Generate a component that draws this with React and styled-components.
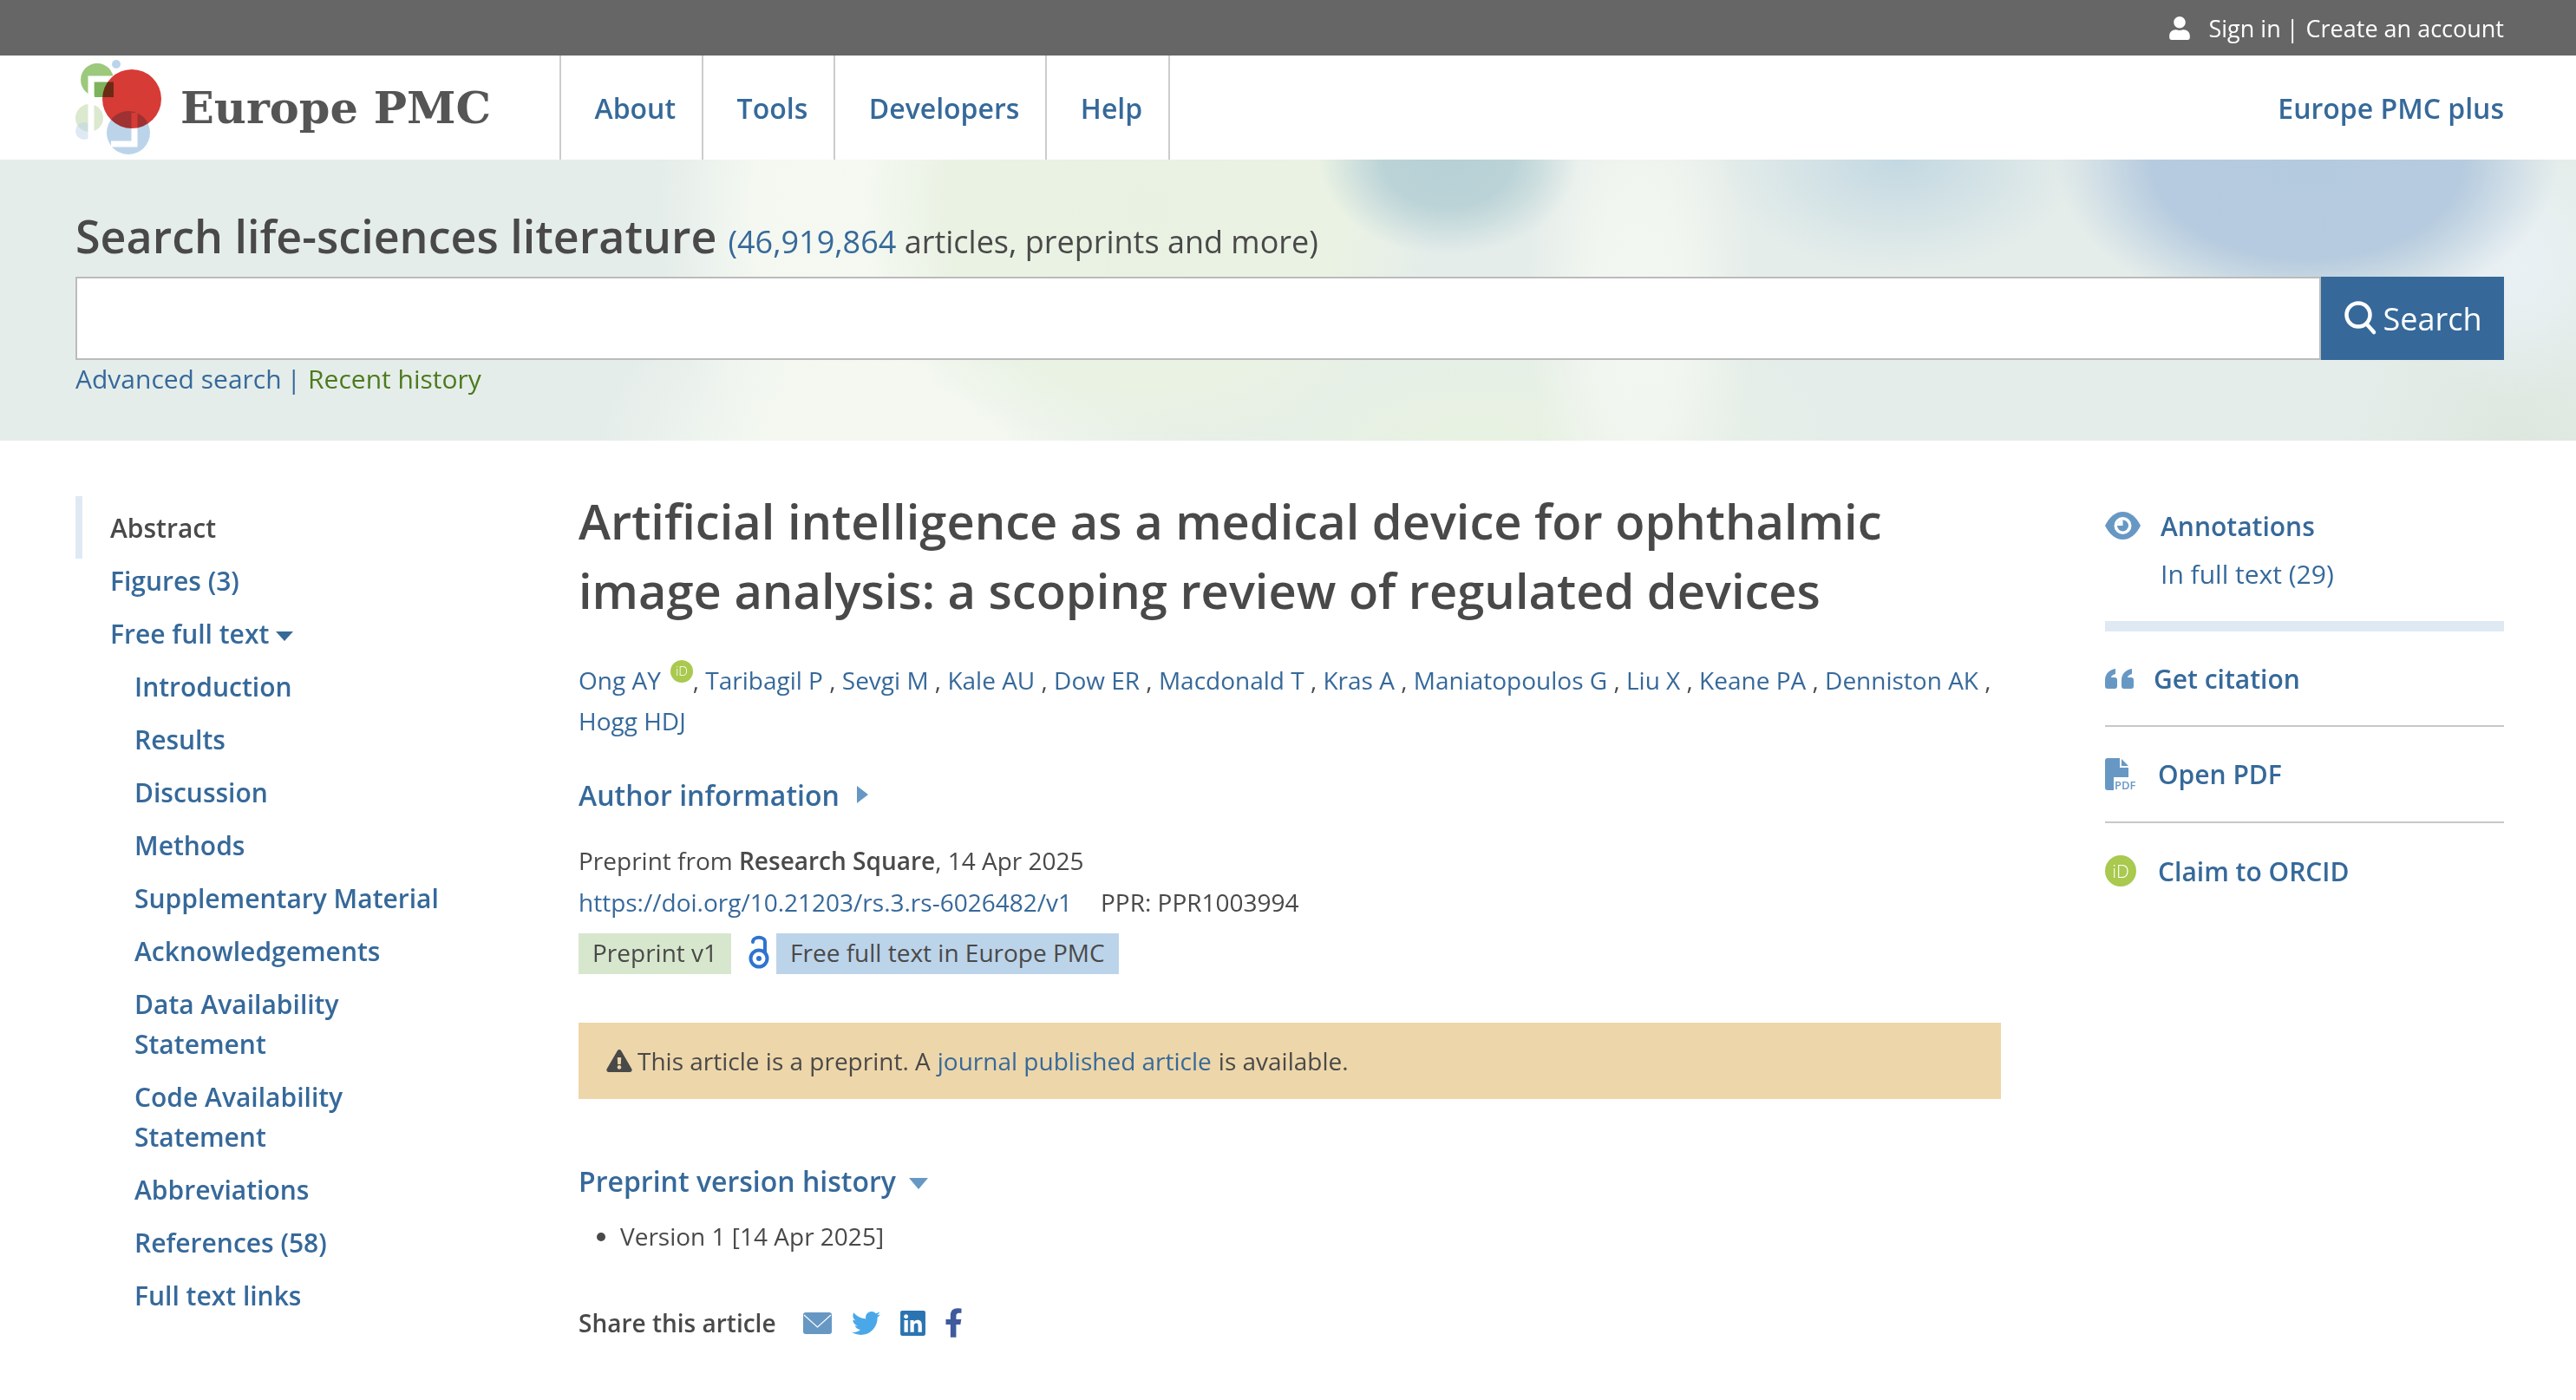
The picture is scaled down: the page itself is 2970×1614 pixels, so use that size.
import React from "react";
import styled, { createGlobalStyle } from "styled-components";
import { FaUser, FaTwitter, FaLinkedin, FaFacebookF, FaExclamationTriangle } from "react-icons/fa";

const linkBlue = "#36699a";
const iconBlue = "#6798c4";
const ink = "#494949";

const GlobalStyle = createGlobalStyle`
  html, body {
    margin: 0;
    background: #fff;
    font-family: "Open Sans", "Noto Sans", sans-serif;
    color: ${ink};
  }
  * { box-sizing: border-box; }
`;

const TopBar = styled.div`
  height: 64px;
  background: #666;
  color: #fff;
  display: flex;
  align-items: center;
  justify-content: flex-end;
  padding-right: 83px;
  font-size: 27px;
`;
const UserIcon = styled(FaUser)`
  width: 24px;
  height: 27px;
  margin-right: 21px;
`;
const Pipe = styled.span`
  margin: 0 8px 0 6px;
`;

const Header = styled.header`
  height: 120px;
  display: flex;
  align-items: stretch;
  padding: 0 83px 0 80px;
`;
const Brand = styled.div`
  width: 565px;
  display: flex;
  align-items: center;
  gap: 18px;
`;
const BrandName = styled.span`
  font-family: "DejaVu Serif", serif;
  font-weight: 700;
  font-size: 51px;
  color: #555;
  white-space: nowrap;
`;
const NavItem = styled.a`
  display: flex;
  align-items: center;
  padding: 0 30px 0 38.5px;
  border-left: 2px solid #ccc;
  ${(p) => p.$last && "border-right: 2px solid #ccc;"}
  color: ${linkBlue};
  font-size: 32px;
  font-weight: 600;
`;
const PlusLink = styled.a`
  margin-left: auto;
  align-self: center;
  color: ${linkBlue};
  font-size: 32px;
  font-weight: 600;
`;

const Hero = styled.section`
  height: 324px;
  padding: 52px 83px 0 87px;
  background-color: #e5edea;
  background-image:
    radial-gradient(ellipse 290px 185px at 2660px 0, #b4cade 0, #b6cbdf 62%, rgba(182, 203, 223, 0) 100%),
    radial-gradient(ellipse 120px 150px at 2900px 130px, rgba(234, 241, 247, 0.9), rgba(234, 241, 247, 0) 100%),
    radial-gradient(ellipse 200px 240px at 2900px 340px, #dde7de 0, rgba(221, 231, 222, 0) 100%),
    radial-gradient(ellipse 210px 130px at 2190px 0, #c3d8e2 0, rgba(195, 216, 226, 0) 100%),
    radial-gradient(ellipse 150px 110px at 1670px 0, #b6d0d5 0, #bbd3d7 50%, rgba(187, 211, 215, 0) 100%),
    radial-gradient(ellipse 130px 330px at 1890px 170px, #f3f7f1 0, #f2f6f0 40%, rgba(243, 247, 241, 0) 100%),
    radial-gradient(ellipse 330px 300px at 1320px 60px, #e9f2e2 0, #eaf2e4 70%, rgba(234, 242, 228, 0) 100%),
    radial-gradient(ellipse 420px 190px at 1700px 330px, #e8f2e1 0, rgba(232, 242, 225, 0) 100%),
    radial-gradient(ellipse 240px 340px at 1000px 60px, #f5f9f2 0, #f4f8f1 55%, rgba(244, 248, 241, 0) 100%),
    radial-gradient(ellipse 330px 220px at 1020px 340px, #f4f8f1 0, #f4f8f1 40%, rgba(244, 248, 241, 0) 100%);
`;
const HeroTitle = styled.div`
  display: flex;
  align-items: baseline;
  gap: 13px;
  height: 83px;
`;
const HeroHeading = styled.h1`
  margin: 0;
  font-size: 52px;
  font-weight: 600;
  color: ${ink};
`;
const HeroCount = styled.span`
  font-size: 36px;
  a {
    color: ${linkBlue};
  }
`;
const SearchRow = styled.div`
  display: flex;
  height: 96px;
`;
const SearchInput = styled.input`
  flex: 1;
  height: 100%;
  background: #fff;
  border: 2px solid #bbb;
  outline: none;
`;
const SearchButton = styled.button`
  width: 211px;
  border: none;
  background: ${linkBlue};
  color: #fff;
  font-family: inherit;
  font-size: 36px;
  display: flex;
  align-items: center;
  justify-content: center;
  gap: 6px;
  padding: 0;
`;
const HeroLinks = styled.div`
  font-size: 30px;
  line-height: 44px;
  color: ${linkBlue};
`;
const GreenLink = styled.a`
  color: #4d7a1e;
`;

const Body = styled.div`
  display: grid;
  grid-template-columns: 580px 1640px 580px;
  padding: 52px 83px 0 87px;
`;

const SideNav = styled.nav`
  padding-top: 12px;
  font-size: 30px;
  font-weight: 600;
  color: ${linkBlue};
`;
const ActiveItem = styled.div`
  height: 72px;
  margin-bottom: 3px;
  border-left: 8px solid #dfe9f3;
  padding-left: 32px;
  display: flex;
  align-items: center;
  color: ${ink};
`;
const SideItem = styled.a`
  display: block;
  margin-bottom: 15px;
  line-height: 46px;
  padding-left: ${(p) => (p.$sub ? "68px" : "40px")};
  width: ${(p) => (p.$sub ? "448px" : "auto")};
`;
const Caret = styled.span`
  display: inline-block;
  width: 0;
  height: 0;
  margin-left: 8px;
  vertical-align: 3px;
  border-left: 10px solid transparent;
  border-right: 10px solid transparent;
  border-top: 11px solid ${linkBlue};
`;

const Main = styled.main`
  min-width: 0;
`;
const Title = styled.h2`
  margin: 0;
  font-size: 56px;
  line-height: 80px;
  font-weight: 600;
  color: ${ink};
`;
const Authors = styled.div`
  margin-top: 41px;
  font-size: 28px;
  line-height: 47px;
  color: ${ink};
  a {
    color: ${linkBlue};
  }
`;
const SectionToggle = styled.div`
  margin-top: ${(p) => p.$top}px;
  font-size: 32px;
  line-height: 46px;
  font-weight: 600;
  color: ${linkBlue};
`;
const RightArrow = styled.span`
  display: inline-block;
  width: 0;
  height: 0;
  margin-left: 20px;
  vertical-align: 3px;
  border-top: 10px solid transparent;
  border-bottom: 10px solid transparent;
  border-left: 13px solid ${iconBlue};
`;
const DownArrow = styled.span`
  display: inline-block;
  width: 0;
  height: 0;
  margin-left: 15px;
  vertical-align: 3px;
  border-left: 11px solid transparent;
  border-right: 11px solid transparent;
  border-top: 13px solid ${iconBlue};
`;
const MetaLine = styled.div`
  font-size: 28px;
  line-height: 48px;
  margin-top: ${(p) => p.$top || 0}px;
  a {
    color: ${linkBlue};
  }
  b {
    font-weight: 600;
  }
`;
const PprLabel = styled.span`
  margin-left: 33px;
`;
const TagRow = styled.div`
  display: flex;
  align-items: stretch;
  height: 47px;
  margin-top: 12px;
`;
const Tag = styled.span`
  display: flex;
  align-items: center;
  padding: 0 16px 3px;
  font-size: 28px;
  background: ${(p) => (p.$tone === "green" ? "#d7e7cd" : "#bcd4ea")};
`;
const OpenAccess = styled.svg`
  width: 24px;
  height: 47px;
  margin: 0 8px 0 20px;
`;
const Notice = styled.div`
  height: 88px;
  margin-top: 56px;
  padding-left: 32px;
  display: flex;
  align-items: center;
  background: #edd6a9;
  font-size: 28px;
  a {
    color: ${linkBlue};
    margin: 0 8px;
  }
`;
const WarnIcon = styled(FaExclamationTriangle)`
  width: 30px;
  height: 26px;
  margin-right: 6px;
`;
const VersionList = styled.ul`
  margin: 17px 0 0;
  padding: 0 0 0 48px;
  font-size: 28px;
  line-height: 46px;
`;
const ShareRow = styled.div`
  display: flex;
  align-items: center;
  height: 50px;
  margin-top: 52px;
  font-size: 28px;
  font-weight: 600;
`;
const ShareIcons = styled.div`
  display: flex;
  align-items: center;
  margin-left: 31px;
`;
const MailIcon = styled.svg`
  width: 33px;
  height: 25px;
`;
const TwitterIcon = styled(FaTwitter)`
  width: 33px;
  height: 33px;
  margin-left: 23px;
  color: #4aa8e8;
`;
const LinkedinIcon = styled(FaLinkedin)`
  width: 29px;
  height: 33px;
  margin-left: 23px;
  color: #2b74b1;
`;
const FacebookIcon = styled(FaFacebookF)`
  width: 21px;
  height: 34px;
  margin-left: 22px;
  color: #3f5a9d;
`;

const Aside = styled.aside`
  padding-left: 120px;
  padding-top: 2px;
  font-size: 30px;
  font-weight: 600;
  color: ${linkBlue};
`;
const AsideHead = styled.div`
  padding-top: 20px;
  display: flex;
  align-items: center;
  height: 68px;
`;
const EyeIcon = styled.svg`
  width: 41px;
  height: 32px;
  margin-right: 23px;
`;
const AsideSub = styled.div`
  margin-top: 9px;
  padding-left: 64px;
  font-weight: 400;
  line-height: 46px;
`;
const ThickRule = styled.div`
  height: 12px;
  margin-top: 31px;
  background: #dfe9f3;
`;
const AsideRow = styled.a`
  display: flex;
  align-items: center;
  height: ${(p) => p.$h}px;
  ${(p) => p.$line && "border-bottom: 2px solid #c8c8c8;"}
`;
const QuoteIcon = styled.svg`
  width: 33px;
  height: 23px;
  margin-right: 23px;
`;
const PdfIcon = styled.svg`
  width: 37px;
  height: 41px;
  margin: 4px 24px 0 0;
`;

const OrcidMark = ({ className }) => (
  <svg className={className} viewBox="0 0 36 36">
    <circle cx="18" cy="18" r="18" fill="#a9c94f" />
    <text x="18" y="25.5" textAnchor="middle" fontFamily="Open Sans" fontSize="21" fontWeight="300" fill="#fff">iD</text>
  </svg>
);
const OrcidBadge = styled(OrcidMark)`
  width: 26px;
  height: 26px;
  margin-left: 11px;
  vertical-align: 8px;
`;
const OrcidLarge = styled(OrcidMark)`
  width: 36px;
  height: 36px;
  margin-right: 25px;
`;

const Logo = () => (
  <svg width="110" height="120" viewBox="80 64 110 120">
    <circle cx="134" cy="74" r="5" fill="#bcd4ea" />
    <circle cx="112" cy="92" r="19" fill="#9cc97c" />
    <rect x="109" y="94" width="22" height="18" fill="#7fb35b" />
    <circle cx="103" cy="136" r="16" fill="#dbe9cf" />
    <circle cx="97" cy="151" r="10" fill="#bdd4ea" fillOpacity="0.5" />
    <circle cx="148" cy="153" r="25" fill="#bcd4ea" />
    <path d="M105 160V91H135" fill="none" stroke="#fff" strokeWidth="7" />
    <path d="M155 130V166H128" fill="none" stroke="#fff" strokeWidth="7" />
    <circle cx="152" cy="114" r="34" fill="#d63b36" style={{ mixBlendMode: "multiply" }} />
  </svg>
);

const authors = ["Taribagil P", "Sevgi M", "Kale AU", "Dow ER", "Macdonald T", "Kras A", "Maniatopoulos G", "Liu X", "Keane PA", "Denniston AK"];

const subItems = ["Introduction", "Results", "Discussion", "Methods", "Supplementary Material", "Acknowledgements", "Data Availability Statement", "Code Availability Statement", "Abbreviations", "References (58)", "Full text links"];

export default function App() {
  return (
    <>
      <GlobalStyle />
      <TopBar>
        <UserIcon />
        <span>Sign in</span>
        <Pipe>|</Pipe>
        <span>Create an account</span>
      </TopBar>
      <Header>
        <Brand>
          <Logo />
          <BrandName>Europe PMC</BrandName>
        </Brand>
        <NavItem>About</NavItem>
        <NavItem>Tools</NavItem>
        <NavItem>Developers</NavItem>
        <NavItem $last>Help</NavItem>
        <PlusLink>Europe PMC plus</PlusLink>
      </Header>
      <Hero>
        <HeroTitle>
          <HeroHeading>Search life-sciences literature</HeroHeading>
          <HeroCount>
            <a>(46,919,864</a> articles, preprints and more)
          </HeroCount>
        </HeroTitle>
        <SearchRow>
          <SearchInput />
          <SearchButton>
            <svg width="40" height="42" viewBox="0 0 40 42" fill="none" stroke="#fff" strokeWidth="4.5" strokeLinecap="round">
              <circle cx="17" cy="17" r="13.5" />
              <path d="M27 28L35 37" />
            </svg>
            Search
          </SearchButton>
        </SearchRow>
        <HeroLinks>
          <a>Advanced search</a>
          <Pipe>|</Pipe>
          <GreenLink>Recent history</GreenLink>
        </HeroLinks>
      </Hero>
      <Body>
        <SideNav>
          <ActiveItem>Abstract</ActiveItem>
          <SideItem>Figures (3)</SideItem>
          <SideItem>
            Free full text<Caret />
          </SideItem>
          {subItems.map((item) => (
            <SideItem $sub key={item}>
              {item}
            </SideItem>
          ))}
        </SideNav>
        <Main>
          <Title>Artificial intelligence as a medical device for ophthalmic image analysis: a scoping review of regulated devices</Title>
          <Authors>
            <a>Ong AY</a>
            <OrcidBadge />
            ,{" "}
            {authors.map((name) => (
              <span key={name}>
                <a>{name}</a> ,{" "}
              </span>
            ))}
            <a>Hogg HDJ</a>
          </Authors>
          <SectionToggle $top={39}>
            Author information
            <RightArrow />
          </SectionToggle>
          <MetaLine $top={28}>
            Preprint from <b>Research Square</b>, 14 Apr 2025
          </MetaLine>
          <MetaLine>
            <a>https://doi.org/10.21203/rs.3.rs-6026482/v1</a>
            <PprLabel>PPR: PPR1003994</PprLabel>
          </MetaLine>
          <TagRow>
            <Tag $tone="green">Preprint v1</Tag>
            <OpenAccess viewBox="0 0 24 47" fill="none" stroke="#2f73d0" strokeWidth="4">
              <circle cx="12" cy="29" r="9.5" />
              <circle cx="12" cy="29" r="3" fill="#2f73d0" stroke="none" />
              <path d="M5 10C5 3 19 3 19 10V21" strokeLinecap="round" />
            </OpenAccess>
            <Tag $tone="blue">Free full text in Europe PMC</Tag>
          </TagRow>
          <Notice>
            <WarnIcon />
            This article is a preprint. A<a>journal published article</a>is available.
          </Notice>
          <SectionToggle $top={72}>
            Preprint version history
            <DownArrow />
          </SectionToggle>
          <VersionList>
            <li>Version 1 [14 Apr 2025]</li>
          </VersionList>
          <ShareRow>
            Share this article
            <ShareIcons>
              <MailIcon viewBox="0 0 33 25">
                <rect width="33" height="25" rx="3" fill={iconBlue} />
                <path d="M1 3L16.5 17L32 3" fill="none" stroke="#fff" strokeWidth="1.2" />
              </MailIcon>
              <TwitterIcon />
              <LinkedinIcon />
              <FacebookIcon />
            </ShareIcons>
          </ShareRow>
        </Main>
        <Aside>
          <AsideHead>
            <EyeIcon viewBox="0 0 41 32">
              <path d="M0 16C5 6 12 0 20.5 0S36 6 41 16C36 26 29 32 20.5 32S5 26 0 16Z" fill={iconBlue} />
              <circle cx="20.5" cy="16" r="10" fill="#fff" />
              <circle cx="20.5" cy="16" r="6.5" fill={iconBlue} />
              <path d="M20.5 9.5A6.5 6.5 0 0 0 14 16H20.5Z" fill="#fff" />
            </EyeIcon>
            Annotations
          </AsideHead>
          <AsideSub>In full text (29)</AsideSub>
          <ThickRule />
          <AsideRow $h={110} $line>
            <QuoteIcon viewBox="0 0 33 23">
              <path
                d="M0 13C0 6 5 1 12 0V6C9 7 7 8 7 10H11A3 3 0 0 1 14 13V20A3 3 0 0 1 11 23H3A3 3 0 0 1 0 20ZM19 13C19 6 24 1 31 0V6C28 7 26 8 26 10H30A3 3 0 0 1 33 13V20A3 3 0 0 1 30 23H22A3 3 0 0 1 19 20Z"
                fill={iconBlue}
              />
            </QuoteIcon>
            Get citation
          </AsideRow>
          <AsideRow $h={111} $line>
            <PdfIcon viewBox="0 0 37 41">
              <path d="M3 0H17V11H27V22H10V37H3A3 3 0 0 1 0 34V3A3 3 0 0 1 3 0Z" fill={iconBlue} />
              <path d="M19 1L27 9H19Z" fill={iconBlue} />
              <text x="11" y="36" fontFamily="Open Sans" fontSize="13" fontWeight="600" fill={iconBlue}>PDF</text>
            </PdfIcon>
            Open PDF
          </AsideRow>
          <AsideRow $h={110}>
            <OrcidLarge />
            Claim to ORCID
          </AsideRow>
        </Aside>
      </Body>
    </>
  );
}
